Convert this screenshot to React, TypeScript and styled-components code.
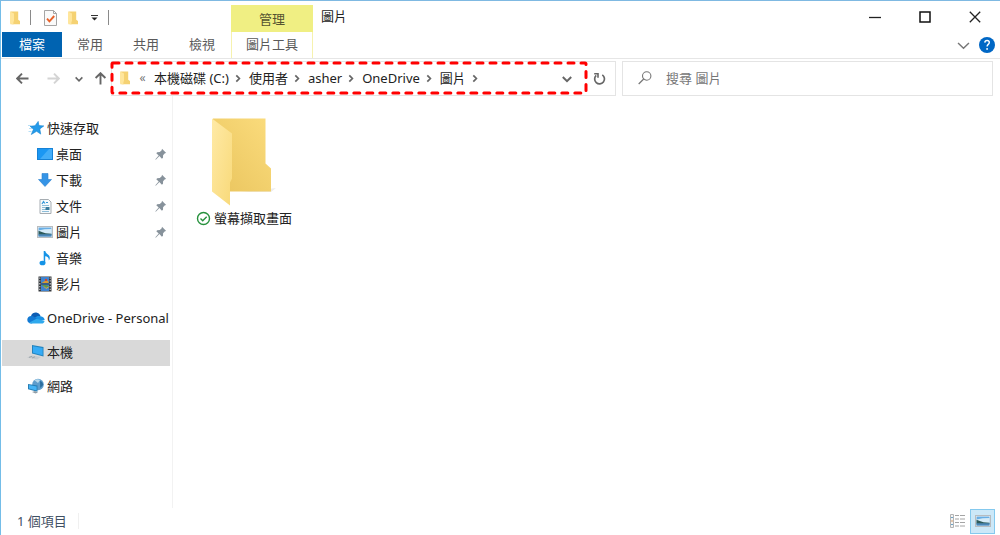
import React from "react";
import styled, { createGlobalStyle } from "styled-components";

const Global = createGlobalStyle`
  * { box-sizing: border-box; }
  body { margin: 0; background: #fff; }
  button, input { font: inherit; color: inherit; }
  button { border: 0; padding: 0; background: none; cursor: default; }
  svg { display: block; flex: none; }
`;

const Window = styled.div`
  display: flex;
  flex-direction: column;
  min-height: 100vh;
  border-top: 1px solid #7fb9e2;
  border-left: 1px solid #74bde8;
  font: 13px/20px "Noto Sans", "Noto Sans CJK TC", sans-serif;
  color: #222;
  background: #fff;
`;

const TitleBar = styled.header`
  display: flex;
  height: 31px;
`;

const QuickAccess = styled.div`
  display: flex;
  align-items: center;
  width: 230px;
  padding: 2px 0 0 7px;
`;

const QuickButton = styled.button<{ $w: number }>`
  display: flex;
  justify-content: center;
  width: ${(p) => p.$w}px;
`;

const Divider = styled.span`
  width: 1px;
  height: 15px;
  background: #8a8a8a;
`;

const ContextTab = styled.div`
  width: 82px;
  margin-top: 4px;
  padding-top: 4px;
  background: #f0ef83;
  color: #555330;
  text-align: center;
`;

const Title = styled.h1`
  flex: 1;
  margin: 0;
  padding: 5px 8px;
  font-size: 13px;
  font-weight: 400;
`;

const WindowButton = styled.button`
  display: flex;
  align-items: center;
  justify-content: center;
  width: 50px;
  height: 31px;
`;

const TabBar = styled.nav`
  display: flex;
  height: 27px;
  padding-left: 1px;
  border-bottom: 1px solid #e6e6e6;
`;

const Tab = styled.button<{ $kind?: "file" | "context" }>`
  width: ${(p) => (p.$kind === "file" ? 60 : p.$kind === "context" ? 82 : 56)}px;
  height: ${(p) => (p.$kind === "context" ? 26 : 25)}px;
  margin-left: ${(p) => (p.$kind === "context" ? 1 : 0)}px;
  padding-bottom: 2px;
  color: ${(p) => (p.$kind === "file" ? "#fff" : "#5a5a5a")};
  background: ${(p) => (p.$kind === "file" ? "#0063b1" : "#fff")};
  border: solid #f6f2ae;
  border-width: ${(p) => (p.$kind === "context" ? "0 1px" : "0")};
`;

const TabTools = styled.div`
  display: flex;
  align-items: center;
  gap: 9px;
  margin-left: auto;
  padding-right: 5px;
`;

const Toolbar = styled.div`
  display: grid;
  grid-template-columns: 110px minmax(0, 505fr) 6px minmax(0, 371fr);
  margin: 2px 7px 0 0;
  height: 35px;
`;

const NavButtons = styled.div`
  display: grid;
  grid-template-columns: 31px 28px 19px 13px;
  align-items: center;
  padding-left: 15px;
`;

const AddressBox = styled.div`
  position: relative;
  display: flex;
  align-items: center;
  padding: 0 0 2px 7px;
  border: 1px solid #e4e4e4;
`;

const Highlight = styled.svg`
  position: absolute;
  top: 1px;
  left: 0;
  width: calc(100% - 29px);
  height: calc(100% - 3px);
  overflow: visible;
`;

const Overflow = styled.span`
  width: 23px;
  color: #777;
  font-size: 12px;
  text-align: center;
`;

const Crumb = styled.button`
  display: flex;
  align-items: center;
  white-space: nowrap;
  & > svg { margin: 2px 7px 0 5px; }
`;

const AddressTools = styled.div`
  display: flex;
  align-items: center;
  gap: 21px;
  margin-left: auto;
  padding: 2px 9px 0 0;
`;

const SearchBox = styled.label`
  display: flex;
  grid-column: 4;
  align-items: center;
  gap: 14px;
  padding: 0 0 2px 15px;
  border: 1px solid #e4e4e4;
`;

const SearchInput = styled.input`
  flex: 1;
  min-width: 0;
  padding: 0;
  border: 0;
  outline: 0;
  background: none;
  &::placeholder { color: #767676; opacity: 1; }
`;

const Body = styled.div`
  display: flex;
  flex: 1;
`;

const Sidebar = styled.nav`
  display: flex;
  flex-direction: column;
  width: 172px;
  padding: 20px 2px 0 1px;
  border-right: 1px solid #f2f2f2;
`;

const Item = styled.a<{ $level?: number; $gap?: boolean; $active?: boolean }>`
  display: flex;
  align-items: center;
  gap: 2px;
  height: 26px;
  margin-top: ${(p) => (p.$gap ? 8 : 0)}px;
  padding-left: ${(p) => (p.$level ? 34 : 25)}px;
  padding-bottom: 2px;
  background: ${(p) => (p.$active ? "#d9d9d9" : "transparent")};
  color: #222;
  text-decoration: none;
  white-space: nowrap;
`;

const ItemIcon = styled.span`
  display: flex;
  justify-content: center;
  width: 18px;
`;

const Pin = styled.span`
  margin-left: auto;
  padding-right: 3px;
`;

const Content = styled.main`
  flex: 1;
  padding: 21px;
`;

const FileTile = styled.button`
  display: flex;
  flex-direction: column;
  align-items: center;
  gap: 1px;
  width: 100px;
`;

const FileName = styled.span`
  display: flex;
  align-items: center;
  gap: 3px;
  white-space: nowrap;
`;

const StatusBar = styled.footer`
  display: flex;
  align-items: center;
  height: 27px;
  padding: 0 5px 1px 16px;
  color: #3f5064;
`;

const StatusCount = styled.span`
  padding-right: 11px;
  border-right: 1px solid #f0f0f0;
  line-height: 16px;
`;

const ViewButtons = styled.div`
  display: flex;
  margin-left: auto;
`;

const ViewButton = styled.button<{ $active?: boolean }>`
  display: flex;
  align-items: center;
  justify-content: center;
  width: 25px;
  height: 25px;
  border: 1px solid ${(p) => (p.$active ? "#84c9ee" : "transparent")};
  background: ${(p) => (p.$active ? "#cce8f8" : "transparent")};
`;

const SmallFolder = () => (
  <svg width="12" height="14" viewBox="0 0 12 14">
    <path d="M1.5 .5h7.7v8.2l1.8 1.2v3.4H1.5z" fill="#f5d273" />
    <path d="M1 .5l4 2v7.5l-.6 1v2.8L1 12.3z" fill="#ffe69c" />
  </svg>
);

const CheckPage = () => (
  <svg width="13" height="16" viewBox="0 0 13 16">
    <path d="M.5.5h9l3 3v12H.5z" fill="#fafafa" stroke="#a5a5a5" />
    <path d="M9.5.5v3h3" fill="none" stroke="#a5a5a5" />
    <path d="M3 8.7l2.4 2.6L10.2 6" fill="none" stroke="#e8622a" strokeWidth="1.9" />
  </svg>
);

const Chevron = () => (
  <svg width="8" height="9" viewBox="0 0 8 9">
    <path d="M2.3 1.3L5.4 4.5L2.3 7.7" fill="none" stroke="#666" strokeWidth="1.7" />
  </svg>
);

const Down = ({ size = 10, width = 2, color = "#666" }) => (
  <svg width={size} height={size} viewBox="0 0 10 10">
    <path d="M.8 3L5 7.2L9.2 3" fill="none" stroke={color} strokeWidth={width} />
  </svg>
);

const Arrow = ({ color, turn = 0 }: { color: string; turn?: number }) => (
  <svg width="13" height="13" viewBox="0 0 13 13">
    <path d="M12.5 6.5H1.5M6 1.6L1.2 6.5L6 11.4" transform={`rotate(${turn} 6.5 6.5)`} fill="none" stroke={color} strokeWidth="1.9" />
  </svg>
);

const PinIcon = () => (
  <svg width="12" height="12" viewBox="0 0 12 12">
    <path d="M7 .8L11.2 5l-1.3.3-1.8 1.9-.1 2.6-1.1.9-2.5-2.6L.8 11.7l-.4-.4 3.3-3.7L1.3 5.3l.9-1.1 2.6-.1L6.7 2.2z" fill="#87929b" />
  </svg>
);

const StarIcon = () => (
  <svg width="16" height="14" viewBox="0 0 16 14">
    <path d="M10.2.4l.7 4.2 4.9.3-4 3 .9 5.2-4.1-2.8-5.3 3.2 2.2-5.3L2 5.2l5-.4z" fill="#249bea" stroke="#1684d1" strokeWidth=".6" />
    <path d="M0 4.5h3M1 7.5h3M.5 10.5h3" stroke="#b5dff7" />
  </svg>
);

const DesktopIcon = () => (
  <svg width="16" height="12" viewBox="0 0 16 12">
    <rect x=".5" y=".5" width="15" height="11" fill="#1b97f3" stroke="#1682d6" />
    <path d="M3 11L12 1h3v10z" fill="#43adf8" />
  </svg>
);

const DownloadIcon = () => (
  <svg width="14" height="14" viewBox="0 0 14 14">
    <path d="M4 .5h6v6h3.5L7 13.5L.5 6.5H4z" fill="#3594e6" stroke="#2980ce" strokeWidth=".6" />
  </svg>
);

const DocumentIcon = () => (
  <svg width="13" height="15" viewBox="0 0 13 15">
    <path d="M1 .5h8.5L12 3v11.5H1z" fill="#f6fafc" stroke="#a6adb2" />
    <path d="M3 5l1.5-2.5L6 4.5M7 3.5h2" fill="none" stroke="#3999d8" strokeWidth="1.2" />
    <path d="M3 6.5h7M3 8.5h3M3 10.5h4M3 12.5h7" stroke="#8dbdd9" />
    <path d="M6.5 8h4v3h-4z" fill="#397b9c" />
  </svg>
);

const PictureIcon = () => (
  <svg width="16" height="12" viewBox="0 0 16 12">
    <rect x=".5" y=".5" width="15" height="11" fill="#f3f3f3" stroke="#b8bcbf" />
    <path d="M1.5 1.5h13v9h-13z" fill="#68aee5" />
    <path d="M1.5 4.5l6-1.2 7-.3V8h-13z" fill="#d5ebf8" />
    <path d="M1.5 4.8l4 1.4 3 1 6 .6v1h-13z" fill="#2d5a5a" />
    <path d="M1.5 8.4h13v2.1h-13z" fill="#4a86b8" />
  </svg>
);

const MusicIcon = () => (
  <svg width="12" height="16" viewBox="0 0 12 16">
    <path d="M4.7 1h1.5c.4 3 4.7 3.4 4.6 7 0 1.3-.5 2-1.1 2.6.5-2.6-1-4-3.5-4.3V13H4.7z" fill="#1593e6" />
    <ellipse cx="3.5" cy="13" rx="3" ry="2.3" fill="#1593e6" />
  </svg>
);

const VideoIcon = () => (
  <svg width="14" height="16" viewBox="0 0 14 16">
    <path d="M.5.5h13v15H.5z" fill="#34383d" />
    <path d="M3 1h8v6.5H3zM3 8.5h8V15H3z" fill="#3f83d0" />
    <path d="M3.5 7l2.5-1.5 2-2 2.5 2V7z" fill="#d79a31" />
    <path d="M7 3h2v2H7z" fill="#cc4531" />
    <path d="M3.5 9h4l3 1v1.5h-3z" fill="#5b9a49" />
    <path d="M6 10.5l2 2 2.5-1.5" fill="none" stroke="#e2a93b" />
    <path d="M1.8 1.5v14M12.2 1.5v14" stroke="#d5d5d5" strokeWidth="1.1" strokeDasharray="1.3 1.5" />
  </svg>
);

const CloudIcon = () => (
  <svg width="18" height="12" viewBox="0 0 18 12">
    <path d="M4 4C5 1 8 .2 10 .8c2 .5 3 1.8 3.5 3.2L9 8z" fill="#0d5eb4" />
    <path d="M4.5 11.5C1.5 11.5.3 9.8.3 7.8.3 5.5 2 4 4.3 4c1.4 0 2.7.6 4 1.5L12 8z" fill="#1379d3" />
    <path d="M8 5.6c1.5-1.7 3.5-2 5.6-1.4C16 4.5 17.6 6 17.7 8l-5 1z" fill="#1a91e4" />
    <path d="M2 10.7l7.5-4 8 2.2c0 1.5-1.2 2.6-2.9 2.6H4.5c-1 0-1.8-.2-2.5-.8z" fill="#2fa9ed" />
  </svg>
);

const PcIcon = () => (
  <svg width="18" height="16" viewBox="0 0 18 16">
    <path d="M0 13.5l5-2 9 1.5-4 2.5z" fill="#c4c9cd" />
    <path d="M2 13.4l3-1M5 14l3-1.2" stroke="#8d959b" strokeWidth=".7" />
    <path d="M5 1l11.5 2v9.5L5 9.5z" fill="#2383bd" />
    <path d="M6 2.2l9.6 1.7v7.3L6 8.7z" fill="#36abf5" />
  </svg>
);

const NetworkIcon = () => (
  <svg width="16" height="16" viewBox="0 0 16 16">
    <circle cx="10" cy="6.5" r="5.8" fill="#5e9dcc" />
    <path d="M6.5 2.2c2-1.5 4.3-1.2 5.6-.3L10 5z" fill="#b8d9ec" />
    <path d="M12 3c2 .5 3 2 3.2 4l-3 3z" fill="#2c6e9f" />
    <path d="M0 6l9.5 1.6v6.2L0 11.3z" fill="#267eb5" />
    <path d="M1 7.1l7.6 1.3v4.2L1 10.6z" fill="#45b4f6" />
    <path d="M4 14l3-1 3 1.5-2.5 1z" fill="#909da6" />
  </svg>
);

const LargeFolder = () => (
  <svg width="68" height="90" viewBox="0 0 68 90">
    <defs>
      <linearGradient id="back" x1="0" x2="1" y1="1" y2="0"><stop stopColor="#e9c45d" /><stop offset="1" stopColor="#fbdc7d" /></linearGradient>
      <linearGradient id="front" x1="0" x2="1" y2="1"><stop stopColor="#ffeaa6" /><stop offset="1" stopColor="#f8d979" /></linearGradient>
    </defs>
    <path d="M58 72l8-1-5 4H30z" fill="#eeeeee" />
    <path d="M3 1.500h52.500v45l5.500 5v23H3z" fill="url(#back)" />
    <path d="M2 1.500l20 15v45l-2 4v23L2 74.500z" fill="url(#front)" />
  </svg>
);

const places = [
  { name: "快速存取", icon: <StarIcon /> },
  { name: "桌面", icon: <DesktopIcon />, level: 1, pin: true },
  { name: "下載", icon: <DownloadIcon />, level: 1, pin: true },
  { name: "文件", icon: <DocumentIcon />, level: 1, pin: true },
  { name: "圖片", icon: <PictureIcon />, level: 1, pin: true },
  { name: "音樂", icon: <MusicIcon />, level: 1 },
  { name: "影片", icon: <VideoIcon />, level: 1 },
  { name: "OneDrive - Personal", icon: <CloudIcon />, gap: true },
  { name: "本機", icon: <PcIcon />, gap: true, active: true },
  { name: "網路", icon: <NetworkIcon />, gap: true },
];

const crumbs = ["本機磁碟 (C:)", "使用者", "asher", "OneDrive", "圖片"];

export default function App() {
  return (
    <Window>
      <Global />
      <TitleBar>
        <QuickAccess>
          <QuickButton $w={14} aria-label="資料夾"><SmallFolder /></QuickButton>
          <QuickButton $w={16} as="span"><Divider /></QuickButton>
          <QuickButton $w={24} aria-label="內容"><CheckPage /></QuickButton>
          <QuickButton $w={22} aria-label="新增資料夾"><SmallFolder /></QuickButton>
          <QuickButton $w={20} aria-label="自訂">
            <svg width="7" height="6" viewBox="0 0 7 6"><path d="M0 .5h7" stroke="#333" /><path d="M.5 2.5h6l-3 3z" fill="#222" /></svg>
          </QuickButton>
          <QuickButton $w={9} as="span"><Divider /></QuickButton>
        </QuickAccess>
        <ContextTab>管理</ContextTab>
        <Title>圖片</Title>
        <WindowButton aria-label="最小化"><svg width="12" height="12"><path d="M0 6.500h12" stroke="#222" strokeWidth="1.3" /></svg></WindowButton>
        <WindowButton aria-label="最大化"><svg width="12" height="12"><path d="M1 1h10v10H1z" fill="none" stroke="#111" strokeWidth="1.5" /></svg></WindowButton>
        <WindowButton aria-label="關閉"><svg width="12" height="12"><path d="M.8.8l10.400 10.400M11.200.8L.8 11.200" stroke="#222" strokeWidth="1.3" /></svg></WindowButton>
      </TitleBar>
      <TabBar>
        <Tab $kind="file">檔案</Tab>
        <Tab>常用</Tab>
        <Tab>共用</Tab>
        <Tab>檢視</Tab>
        <Tab $kind="context">圖片工具</Tab>
        <TabTools>
          <button aria-label="展開功能區"><Down size={13} width={1.1} color="#777" /></button>
          <button aria-label="說明">
            <svg width="16" height="16" viewBox="0 0 16 16">
              <circle cx="8" cy="8" r="8" fill="#0067c5" />
              <path d="M5.8 5.6c.1-1.3 1-2.1 2.3-2.1s2.2.8 2.2 2c0 1.9-2.2 1.9-2.2 4" fill="none" stroke="#fff" strokeWidth="1.4" />
              <circle cx="8.1" cy="11.9" r=".95" fill="#fff" />
            </svg>
          </button>
        </TabTools>
      </TabBar>
      <Toolbar>
        <NavButtons>
          <button aria-label="上一頁"><Arrow color="#666" /></button>
          <button aria-label="下一頁"><Arrow color="#d4d4d4" turn={180} /></button>
          <button aria-label="最近的位置"><Down size={8} width={2} /></button>
          <button aria-label="上移"><Arrow color="#666" turn={90} /></button>
        </NavButtons>
        <AddressBox>
          <SmallFolder />
          <Overflow>«</Overflow>
          {crumbs.map((name) => (
            <Crumb key={name}>{name}<Chevron /></Crumb>
          ))}
          <AddressTools>
            <button aria-label="先前的位置"><Down /></button>
            <button aria-label="重新整理">
              <svg width="13" height="13" viewBox="0 0 13 13">
                <path d="M9.300 2.900A4.900 4.900 0 1 1 3.200 3.400" fill="none" stroke="#666" strokeWidth="1.7" />
                <path d="M1.2 1.700H5v4" fill="none" stroke="#666" strokeWidth="1.6" />
              </svg>
            </button>
          </AddressTools>
          <Highlight aria-hidden="true">
            <rect width="100%" height="100%" rx="1" fill="none" stroke="#ff0000" strokeWidth="3" strokeLinecap="round" strokeDasharray="6 7" />
          </Highlight>
        </AddressBox>
        <SearchBox>
          <svg width="14" height="14" viewBox="0 0 14 14">
            <circle cx="8.7" cy="5" r="4.2" fill="none" stroke="#777" strokeWidth="1.1" />
            <path d="M5.7 8L.7 13" stroke="#777" strokeWidth="1.2" />
          </svg>
          <SearchInput aria-label="搜尋 圖片" placeholder="搜尋 圖片" />
        </SearchBox>
      </Toolbar>
      <Body>
        <Sidebar>
          {places.map((p) => (
            <Item key={p.name} href="#" $level={p.level} $gap={p.gap} $active={p.active}>
              <ItemIcon>{p.icon}</ItemIcon>
              {p.name}
              {p.pin && <Pin><PinIcon /></Pin>}
            </Item>
          ))}
        </Sidebar>
        <Content>
          <FileTile>
            <LargeFolder />
            <FileName>
              <svg width="15" height="15" viewBox="0 0 15 15">
                <circle cx="7.5" cy="7.5" r="6" fill="#fff" stroke="#27913d" strokeWidth="1.4" />
                <path d="M4.5 7.6l2.2 2.1 4-4" fill="none" stroke="#27913d" strokeWidth="1.4" />
              </svg>
              螢幕擷取畫面
            </FileName>
          </FileTile>
        </Content>
      </Body>
      <StatusBar>
        <StatusCount>1 個項目</StatusCount>
        <ViewButtons>
          <ViewButton aria-label="詳細資料">
            <svg width="15" height="14" viewBox="0 0 15 14">
              <path d="M.5.5h3v13h-3z" fill="#f4f4f4" stroke="#b5b5b5" />
              <path d="M1 3.5h2M1 10.5h2" stroke="#6da4c8" />
              <path d="M1 7h2" stroke="#d49a66" />
              <path d="M5 1.5h4M10 1.5h5M5 5h4M10 5h5M5 8.5h4M10 8.5h5M5 12h4M10 12h5" stroke="#a4a4a4" />
            </svg>
          </ViewButton>
          <ViewButton $active aria-label="大圖示"><PictureIcon /></ViewButton>
        </ViewButtons>
      </StatusBar>
    </Window>
  );
}
